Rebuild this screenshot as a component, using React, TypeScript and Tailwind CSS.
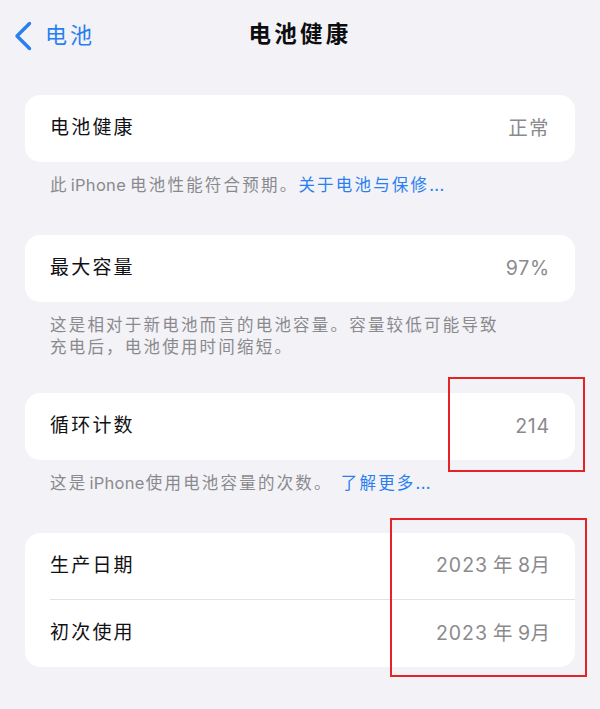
import type { ReactNode } from "react"

const cjk = { fontFamily: "Inter, 'Noto Sans CJK SC', 'Noto Sans', sans-serif" }

type Row = { label: string; value: ReactNode }

// Latin runs sit tighter than the spaced-out Chinese text
function Latin({ children, className = "" }: { children: ReactNode; className?: string }) {
  return <span className={"tracking-[0.3px] " + className}>{children}</span>
}

function Card({ rows }: { rows: Row[] }) {
  return (
    <div className="mx-[25px] rounded-[15px] bg-white">
      {rows.map((row, i) => (
        <div key={row.label} className="pl-[25px]">
          <div
            className={
              "flex h-[67px] items-center justify-between pr-[25px] " +
              (i < rows.length - 1 ? "border-b border-[#e3e3e7]" : "")
            }
          >
            <span className="whitespace-nowrap text-[19px] tracking-[2.2px] text-[#111114]">{row.label}</span>
            <span className="whitespace-nowrap text-[19.5px] text-[#8a8a8e]">{row.value}</span>
          </div>
        </div>
      ))}
    </div>
  )
}

function Footnote({ children }: { children: ReactNode }) {
  return (
    <p className="px-[50px] pt-[12px] text-[16.5px] leading-[22px] tracking-[2.2px] text-[#8a8a8e]">
      {children}
    </p>
  )
}

function Link({ children }: { children: ReactNode }) {
  return <span className="text-[#2a7ff0]">{children}</span>
}

function YearMonth({ year, month }: { year: string; month: string }) {
  return (
    <span className="flex items-baseline">
      <Latin className="tracking-[1px]">{year}</Latin>
      <span className="ml-[5px] tracking-[1.5px]">年</span>
      <Latin className="ml-[4px]">{month}</Latin>
      <span>月</span>
    </span>
  )
}

export default function App() {
  return (
    <div className="relative h-[709px] w-[600px] overflow-hidden bg-[#f2f2f7]" style={cjk}>
      <header className="relative flex h-[68px] items-center justify-center">
        <div className="absolute left-[14px] top-[19px] flex items-center gap-[13px] text-[#2a7ff0]">
          <svg width="18" height="30" viewBox="0 0 18 30" fill="none">
            <path
              d="M15.5 2.5 3 15l12.5 12.5"
              stroke="currentColor"
              strokeWidth="3.4"
              strokeLinecap="round"
              strokeLinejoin="round"
            />
          </svg>
          <span className="text-[22px] tracking-[3px]">电池</span>
        </div>
        <h1 className="text-[22.5px] font-bold tracking-[3.2px] text-[#0d0d10]">电池健康</h1>
      </header>

      <main className="pt-[27px]">
        <Card rows={[{ label: "电池健康", value: <span className="tracking-[1.4px]">正常</span> }]} />
        <Footnote>
          此<Latin className="ml-[2px] mr-[4px]">iPhone</Latin>电池性能符合预期。
          <Link>
            关于电池与保修<Latin>...</Latin>
          </Link>
        </Footnote>

        <div className="pt-[39px]">
          <Card rows={[{ label: "最大容量", value: <Latin className="tracking-[0.8px]">97%</Latin> }]} />
        </div>
        <Footnote>
          这是相对于新电池而言的电池容量。容量较低可能导致
          <br />
          充电后，电池使用时间缩短。
        </Footnote>

        <div className="pt-[35px]">
          <Card rows={[{ label: "循环计数", value: <Latin className="tracking-[0.8px]">214</Latin> }]} />
        </div>
        <Footnote>
          这是<Latin className="ml-[2px] mr-[1px]">iPhone</Latin>使用电池容量的次数。
          <Link>
            <span className="ml-[8px]">了解更多</span>
            <Latin>...</Latin>
          </Link>
        </Footnote>

        <div className="pt-[39px]">
          <Card
            rows={[
              { label: "生产日期", value: <YearMonth year="2023" month="8" /> },
              { label: "初次使用", value: <YearMonth year="2023" month="9" /> },
            ]}
          />
        </div>
      </main>

      {/* highlight frames drawn over the list */}
      <div className="absolute left-[448px] top-[377px] h-[95px] w-[137px] border-2 border-[#e42326]" />
      <div className="absolute left-[390px] top-[518px] h-[159px] w-[197px] border-2 border-[#e42326]" />
    </div>
  )
}
